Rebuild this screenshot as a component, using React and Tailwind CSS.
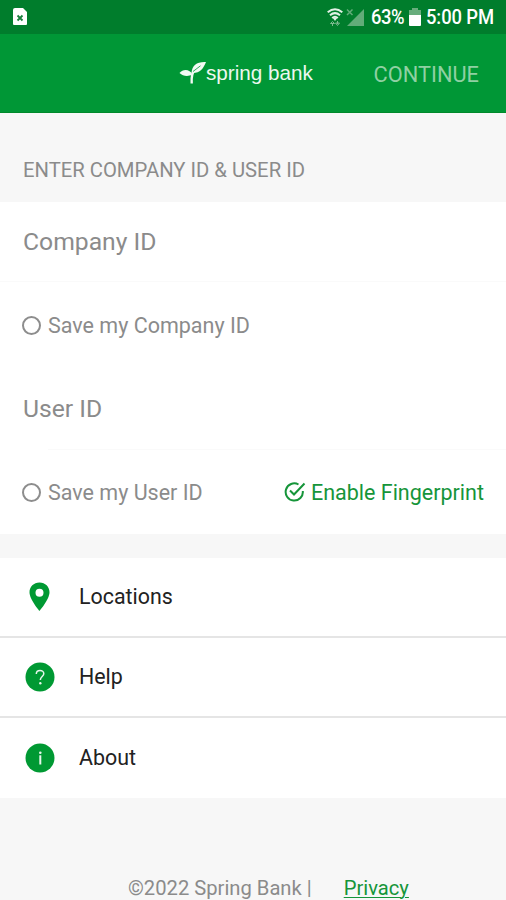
import { useState } from "react";

const menuItems = [
  { label: "Locations", icon: PinIcon },
  { label: "Help", icon: HelpIcon },
  { label: "About", icon: AboutIcon },
];

function PinIcon() {
  return (
    <svg width="30" height="30" viewBox="0 0 30 30" className="-ml-px">
      <path
        fill="#009933"
        fillRule="evenodd"
        d="M15.500 .500C9.700 .500 5.500 4.800 5.500 10.300C5.500 17.500 15.500 29 15.500 29S25.500 17.500 25.500 10.300C25.500 4.800 21.300 .500 15.500 .500ZM15.500 6.800A4 4 0 1 1 15.500 14.800A4 4 0 1 1 15.500 6.800Z"
      />
    </svg>
  );
}

function HelpIcon() {
  return (
    <svg width="30" height="30" viewBox="0 0 30 30">
      <circle cx="15" cy="15" r="14.500" fill="#009933" />
      <path d="M11.300 11.900C11.300 7.300 18.800 7.300 18.800 11.700C18.800 14.300 15.300 14.800 15.300 18" fill="none" stroke="#e6f5eb" strokeWidth="1.500" />
      <circle cx="15.300" cy="21.300" r="1.200" fill="#e6f5eb" />
    </svg>
  );
}

function AboutIcon() {
  return (
    <svg width="30" height="30" viewBox="0 0 30 30">
      <circle cx="15" cy="15" r="14.500" fill="#009933" />
      <circle cx="15.300" cy="9.800" r="1.300" fill="#e6f5eb" />
      <path d="M15.300 12.300V21.500" stroke="#e6f5eb" strokeWidth="2" />
    </svg>
  );
}

function StatusBar() {
  return (
    <div className="flex h-[34px] items-center bg-[#007d2c] pl-[13px] pr-3 text-white">
      <svg width="15" height="18" viewBox="0 0 15 18">
        <path d="M2 0H10L14 4V16Q14 17 13 17H1Q0 17 0 16V2Q0 0 2 0Z" fill="#fff" />
        <path d="M4.500 7.500L9.500 12.500M9.500 7.500L4.500 12.500" stroke="#187f3c" strokeWidth="1.800" />
      </svg>
      <div className="ml-auto flex items-center">
        <svg width="16" height="19" viewBox="0 0 16 19" fill="none" stroke="#e2f1e6" strokeWidth="2">
          <path d="M.7 4.200Q8-1.800 15.300 4.200M3 7.200Q8 3 13 7.200M5.200 10Q8 7.500 10.800 10" />
          <path d="M5.500 9.500H10.500L8 13Z" fill="#e2f1e6" stroke="none" />
          <path d="M3.500 15.500L5.500 13.500L7.500 15.500ZM5.500 15V18M8.500 15L10.500 17.500L12.500 15ZM10.500 13V16" stroke="#7fba91" strokeWidth="1" />
        </svg>
        <svg width="19" height="19" viewBox="0 0 19 19" className="ml-[3px]">
          <path d="M18 1V18H1Z" fill="#62ac79" />
          <path d="M1 1.500L6.500 7M6.500 1.500L1 7" stroke="#62ac79" strokeWidth="1.500" />
        </svg>
        <span className="ml-[6px] w-[34px] origin-left scale-x-[0.920] whitespace-nowrap text-[20px] font-medium leading-none tracking-[-0.500px]">63%</span>
        <svg width="12" height="18" viewBox="0 0 12 18" className="ml-1">
          <path d="M3 0H9V2H12V7H0V2H3Z" fill="#68ad7c" />
          <path d="M0 7H12V17Q12 18 11 18H1Q0 18 0 17Z" fill="#fff" />
        </svg>
        <span className="ml-[5px] w-[68px] origin-left scale-x-[0.920] whitespace-nowrap text-[20px] font-medium leading-none tracking-[-0.100px]">5:00 PM</span>
      </div>
    </div>
  );
}

function Header() {
  return (
    <header className="flex h-[79px] items-center border-b border-[#008a2b] bg-[#009736] pl-[179px] pr-[27px]">
      <div className="flex items-center">
        <svg width="27" height="24" viewBox="0 0 27 24" fill="#f2faf4">
          <path d="M27 1C18 .5 13 4 12.500 12C21 12.500 24 8 27 1Z" />
          <path d="M.500 12C4 7.500 11 8 13.500 13.500C8.500 16 4 15 .500 12Z" />
          <path d="M16 9Q12 12 12.700 22.500" fill="none" stroke="#f2faf4" strokeWidth="2.400" />
          <path d="M14 10.500L21.500 4.800" stroke="#009736" strokeWidth=".8" />
        </svg>
        <span className="whitespace-nowrap font-['Liberation_Sans',sans-serif] text-[20.700px] leading-none text-[#edf8f0]">spring bank</span>
      </div>
      <button className="ml-auto pt-1 text-[21.800px] leading-none text-[#8fd0a3]">CONTINUE</button>
    </header>
  );
}

function SaveOption({ label, checked, onChange }) {
  return (
    <button className="flex items-center" onClick={onChange}>
      <span className={`size-[19px] rounded-full border-2 border-[#8d8d8d] ${checked ? "bg-[#009933]" : ""}`} />
      <span className="ml-[7px] whitespace-nowrap pt-[2px] text-[21.500px]">{label}</span>
    </button>
  );
}

export default function App() {
  const [saveCompany, setSaveCompany] = useState(false);
  const [saveUser, setSaveUser] = useState(false);

  return (
    <div className="flex h-[900px] w-[506px] flex-col overflow-hidden bg-[#f7f7f7] font-['Roboto',sans-serif] text-[#8b8b8b]">
      <StatusBar />
      <Header />
      <div className="flex h-[89px] items-center px-[23px] pt-[25px]">
        <h2 className="whitespace-nowrap text-[20.250px] leading-6">ENTER COMPANY ID &amp; USER ID</h2>
      </div>

      {/* Login form */}
      <section className="h-[332px] bg-white">
        <div className="flex h-[80px] items-center border-b border-[#fafafa] px-[23px] text-[24.700px]">Company ID</div>
        <div className="flex h-[87px] items-center pl-[22px]">
          <SaveOption label="Save my Company ID" checked={saveCompany} onChange={() => setSaveCompany(!saveCompany)} />
        </div>
        <div className="flex h-[80px] items-center px-[23px] text-[24.700px]">User ID</div>
        <div className="ml-12 h-px bg-[#fafafa]" />
        <div className="flex h-[84px] items-center justify-between pl-[22px] pr-[22px]">
          <SaveOption label="Save my User ID" checked={saveUser} onChange={() => setSaveUser(!saveUser)} />
          <button className="flex items-center text-[#16953a]">
            <svg width="22" height="20" viewBox="0 0 22 20" fill="none" stroke="currentColor" strokeWidth="2">
              <path d="M14.500 2.500A8.600 8.600 0 1 0 18.800 9" />
              <path d="M6 8.500L10 12.500L20.500 1.500" />
            </svg>
            <span className="ml-[5px] whitespace-nowrap pt-[2px] text-[21.500px]">Enable Fingerprint</span>
          </button>
        </div>
      </section>

      <nav className="mt-6 divide-y-2 divide-[#e5e5e5] bg-white">
        {menuItems.map(({ label, icon: Icon }) => (
          <a key={label} className="flex h-20 items-center pl-[25px] text-[21.400px] text-[#222]">
            <span className="w-[54px]">
              <Icon />
            </span>
            {label}
          </a>
        ))}
      </nav>

      <footer className="flex pl-[128px] pt-[78px] text-[20.200px] leading-6">
        <span className="whitespace-nowrap">©2022 Spring Bank |</span>
        <a className="ml-8 text-[#16953a] underline decoration-1 underline-offset-2">Privacy</a>
      </footer>
    </div>
  );
}
